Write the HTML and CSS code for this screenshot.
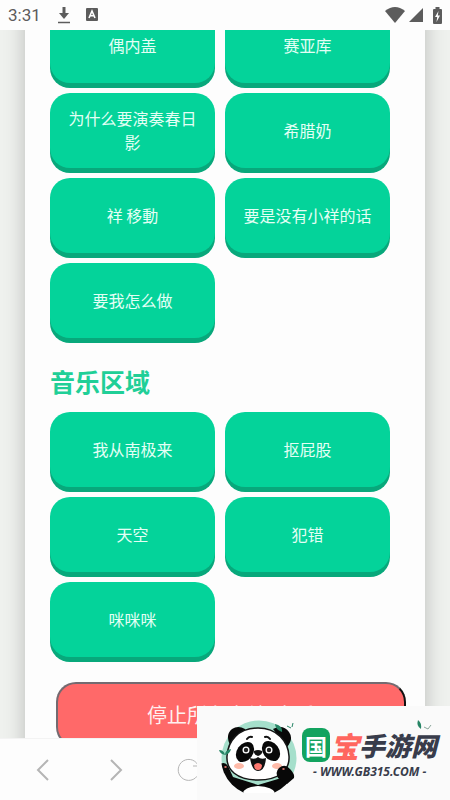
FILE: index.html
```html
<!DOCTYPE html>
<html lang="zh-CN">
<head>
<meta charset="utf-8">
<meta name="viewport" content="width=device-width, initial-scale=1">
<title>音乐区域</title>
<link rel="stylesheet" href="styles.css">
</head>
<body>
<div class="screen">
  <header class="status">
    <time class="clock">3:31</time>
    <svg class="status-download" width="14" height="18" viewBox="0 0 14 18" aria-hidden="true"><path d="M7 1v7" fill="none" stroke="#5c5c5c" stroke-width="3"/><path d="M2 7h10l-5 6Z" fill="#5c5c5c"/><path d="M1 16.500h12" stroke="#5c5c5c" stroke-width="1.500"/></svg>
    <svg class="status-app" width="12" height="14" viewBox="0 0 12 14" aria-hidden="true"><rect width="12" height="13" rx="1" fill="#5c5c5c"/><path d="M3 10l3-7 3 7M4.200 7.800h3.600" fill="none" stroke="#fff" stroke-width="1.600"/></svg>
    <span class="status-right">
      <svg width="20" height="16" viewBox="0 0 20 16" aria-hidden="true"><path d="M0 4Q10-4 20 4L10 16Z" fill="#5c5c5c"/></svg>
      <svg width="14" height="14" viewBox="0 0 14 14" aria-hidden="true"><path d="M14 0v14H0Z" fill="#5c5c5c"/></svg>
      <svg class="battery" width="9" height="17" viewBox="0 0 9 17" aria-hidden="true"><path d="M2.500 0h4v2H8q1 0 1 1v13q0 1-1 1H1q-1 0-1-1V3q0-1 1-1h1.500Z" fill="#5c5c5c"/><path d="M5.500 4L2 10h2.200L3.500 15 7 8.500H4.800Z" fill="#fff"/></svg>
    </span>
  </header>
  <main class="viewport">
    <div class="card">
      <section class="sounds">
        <button class="sound">偶内盖</button>
        <button class="sound">赛亚库</button>
        <button class="sound">为什么要演奏春日影</button>
        <button class="sound">希腊奶</button>
        <button class="sound">祥 移動</button>
        <button class="sound">要是没有小祥的话</button>
        <button class="sound">要我怎么做</button>
      </section>
      <h2 class="title">音乐区域</h2>
      <section class="sounds">
        <button class="sound">我从南极来</button>
        <button class="sound">抠屁股</button>
        <button class="sound">天空</button>
        <button class="sound">犯错</button>
        <button class="sound">咪咪咪</button>
      </section>
      <button class="stop">停止所有音效/音乐</button>
    </div>
  </main>
  <nav class="browser-bar">
    <button class="nav" aria-label="后退"><svg width="24" height="24" viewBox="0 0 24 24"><path d="M17 2L7 12l10 10" /></svg></button>
    <button class="nav" aria-label="前进"><svg width="24" height="24" viewBox="0 0 24 24"><path d="M7 2l10 10L7 22" /></svg></button>
    <button class="nav" aria-label="刷新"><svg class="thin" width="24" height="24" viewBox="0 0 24 24"><path d="M21 7a10.500 10.500 0 1 0 1 7M22 2v6h-6" /></svg></button>
  </nav>
  <aside class="brand">
    <svg class="panda" width="84" height="80" viewBox="0 0 84 80" aria-hidden="true">
      <defs><clipPath id="badge"><path d="M0 0h84v78H0Z"/></clipPath><clipPath id="round"><circle cx="42" cy="43" r="38"/></clipPath></defs>
      <g clip-path="url(#badge)">
        <circle cx="42" cy="43" r="37.500" fill="#a5dfcb"/>
        <g clip-path="url(#round)">
          <path d="M3 49q5-3 8 2l5 11 25 8 20-6 19-6v22H3Z" fill="#080808"/>
          <path d="M25 80q1-8 16-9 17 1 18 9Z" fill="#fff"/>
        </g>
        <path d="M13 30Q8 20 15 14q6-4 13 0l1 5ZM56 14q10-5 16 3 5 7-2 15Z" fill="#080808"/>
        <path d="M41 13C21 13 11 26 10 41c-1 14 10 24 31 24s32-10 31-24C71 26 60 13 41 13Z" fill="#fff" stroke="#151515" stroke-width="1.500"/>
        <ellipse cx="28" cy="37" rx="8" ry="11" transform="rotate(36 28 37)" fill="#080808"/>
        <ellipse cx="54" cy="36" rx="8" ry="11" transform="rotate(-36 54 36)" fill="#080808"/>
        <circle cx="29" cy="35" r="3.500" fill="#fff"/><circle cx="52" cy="35" r="3.500" fill="#fff"/>
        <circle cx="29" cy="35" r="2.200" fill="#222"/><circle cx="52" cy="35" r="2.200" fill="#222"/>
        <path d="M30 24q2-3 5-2M48 22q3-1 5 2" fill="none" stroke="#111" stroke-width="2" stroke-linecap="round"/>
        <ellipse cx="22" cy="51" rx="5" ry="3" fill="#ffbaa8"/><ellipse cx="60" cy="51" rx="5" ry="3" fill="#ffbaa8"/>
        <path d="M37 36q4-2 8 0 1 3-4 5-5-2-4-5Z" fill="#111"/>
        <path d="M33 43q5 2 8-1 3 3 8 1-1 13-8 13-6 0-8-13Z" fill="#111"/>
        <path d="M37 50q4-4 8 0 0 5-4 5t-4-5Z" fill="#ff786f"/>
        <path d="M61 63q-3-6 1-10 6-5 11 1 5 5 4 9l-7 6Z" fill="#080808"/>
        <path d="M8 52h1M66 54h1" stroke="#ff8a80" stroke-width="1.500" stroke-linecap="round"/>
        <path d="M65 17q-7-3-7-8 8 2 7 8ZM8 40q-5-1-6-5 5 0 6 5ZM8 40q0-5 6-6-1 5-6 6Z" fill="#268565"/>
        <path d="M70 11l4 2M75 12l1-4" stroke="#268565" fill="none"/>
      </g>
    </svg>
    <div class="brand-copy">
      <svg class="sprig" width="16" height="12" viewBox="0 0 16 12" aria-hidden="true"><path d="M2 1q4 3 3 9-5-3-3-9Z" fill="#268565"/><path d="M8 8l4 2 3-4" fill="none" stroke="#8ba69b"/></svg>
      <div class="brand-name"><span class="seal">国</span><span class="coral">宝</span><span class="ink">手游网</span></div>
      <div class="brand-url">- WWW.GB315.COM -</div>
    </div>
  </aside>
</div>
</body>
</html>
```
FILE: styles.css
```css
* { box-sizing: border-box; }
body { margin: 0; font-family: "Noto Sans CJK SC", sans-serif; background: #fdfdfd; }
button { font-family: inherit; padding: 0; }
svg { display: block; }
.screen { position: relative; display: flex; flex-direction: column; height: 100vh; overflow: hidden; }
.status { display: flex; align-items: center; flex: 0 0 30px; padding: 0 8px; background: #fdfdfd; color: #5c5c5c; }
.clock { font: 17px/30px Roboto, sans-serif; }
.status-download { margin-left: 16px; }
.status-app { margin-left: 15px; }
.status-right { display: flex; align-items: center; gap: 4px; margin-left: auto; }
.battery { margin-left: 6px; }
.viewport { flex: 1; min-height: 0; overflow: hidden; padding: 0 25px; background: #eff1ee; }
.card { margin-top: -22px; padding: 0 35px 40px 25px; background: #fdfdfd; box-shadow: 0 0 20px rgba(0, 0, 0, .22); }
.sounds { display: grid; grid-template-columns: 1fr 1fr; grid-auto-rows: 75px; gap: 10px; }
.sound { padding: 0 16px 2px; border: 0; border-radius: 20px; background: #04d39a; box-shadow: 0 5px 0 #08a87b; color: #e3fff5; font-size: 16px; line-height: 24px; }
.title { margin: 25px 0 13px; color: #20cf97; font-size: 25px; line-height: 36px; font-weight: 700; }
.stop { display: block; width: calc(100% + 10px); height: 65px; margin: 25px 0 0 6px; border: 2px solid; border-color: #746a70 #111 #111 #746a70; border-radius: 20px; background: #ff6969; color: #fff0f0; font-size: 20px; }
.browser-bar { display: grid; grid-template-columns: repeat(6, 1fr); flex: 0 0 62px; padding: 0 6px; border-top: 1px solid #f3f3f3; background: #fdfdfd; }
.nav { display: grid; place-items: center; border: 0; background: none; }
.nav svg { fill: none; stroke: #b5b5b5; stroke-width: 2; }
.nav .thin { stroke-width: 1; }
.brand { position: absolute; right: 0; bottom: 0; display: flex; width: 253px; height: 94px; padding: 9px 10px 0 20px; background: #fafafa; }
.panda { flex: none; }
.brand-copy { position: relative; flex: 1; padding-top: 12px; }
.sprig { position: absolute; top: 4px; right: 8px; }
.brand-name { display: flex; align-items: center; font-size: 27px; line-height: 36px; font-weight: 900; font-style: italic; }
.seal { flex: none; width: 28px; margin-left: 1px; border-radius: 8px; background: #12a35f; color: #fff; font-size: 22px; line-height: 34px; font-style: normal; font-weight: 700; text-align: center; }
.coral { color: #ff665f; font-size: 29px; }
.ink { color: #383c4b; font-size: 26px; }
.brand-url { padding-left: 12px; color: #383c4b; white-space: nowrap; font: italic bold 12px/18px "Noto Sans", sans-serif; }
```
